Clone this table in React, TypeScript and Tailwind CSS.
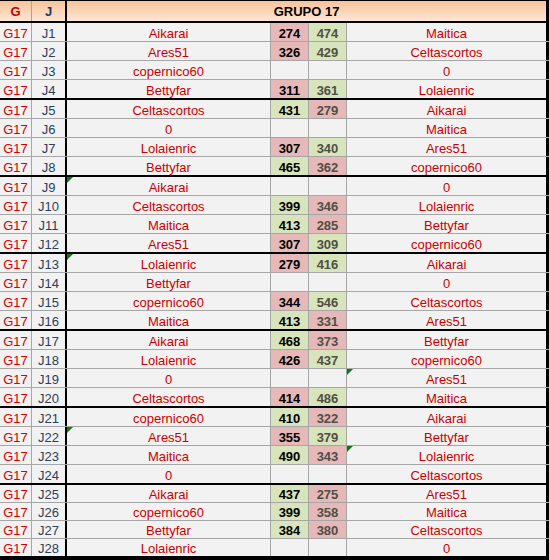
import React from "react";

type Row = {
  j: string;
  a: string;
  b: string;
  s1?: number;
  s2?: number;
  triA?: boolean;
  triB?: boolean;
};

const rows: Row[] = [
  { j: "J1", a: "Aikarai", b: "Maitica", s1: 274, s2: 474 },
  { j: "J2", a: "Ares51", b: "Celtascortos", s1: 326, s2: 429 },
  { j: "J3", a: "copernico60", b: "0" },
  { j: "J4", a: "Bettyfar", b: "Lolaienric", s1: 311, s2: 361 },
  { j: "J5", a: "Celtascortos", b: "Aikarai", s1: 431, s2: 279 },
  { j: "J6", a: "0", b: "Maitica" },
  { j: "J7", a: "Lolaienric", b: "Ares51", s1: 307, s2: 340 },
  { j: "J8", a: "Bettyfar", b: "copernico60", s1: 465, s2: 362 },
  { j: "J9", a: "Aikarai", b: "0", triA: true },
  { j: "J10", a: "Celtascortos", b: "Lolaienric", s1: 399, s2: 346 },
  { j: "J11", a: "Maitica", b: "Bettyfar", s1: 413, s2: 285 },
  { j: "J12", a: "Ares51", b: "copernico60", s1: 307, s2: 309 },
  { j: "J13", a: "Lolaienric", b: "Aikarai", s1: 279, s2: 416, triA: true },
  { j: "J14", a: "Bettyfar", b: "0" },
  { j: "J15", a: "copernico60", b: "Celtascortos", s1: 344, s2: 546 },
  { j: "J16", a: "Maitica", b: "Ares51", s1: 413, s2: 331 },
  { j: "J17", a: "Aikarai", b: "Bettyfar", s1: 468, s2: 373 },
  { j: "J18", a: "Lolaienric", b: "copernico60", s1: 426, s2: 437 },
  { j: "J19", a: "0", b: "Ares51", triB: true },
  { j: "J20", a: "Celtascortos", b: "Maitica", s1: 414, s2: 486 },
  { j: "J21", a: "copernico60", b: "Aikarai", s1: 410, s2: 322 },
  { j: "J22", a: "Ares51", b: "Bettyfar", s1: 355, s2: 379, triA: true },
  { j: "J23", a: "Maitica", b: "Lolaienric", s1: 490, s2: 343, triB: true },
  { j: "J24", a: "0", b: "Celtascortos" },
  { j: "J25", a: "Aikarai", b: "Ares51", s1: 437, s2: 275 },
  { j: "J26", a: "copernico60", b: "Maitica", s1: 399, s2: 358 },
  { j: "J27", a: "Bettyfar", b: "Celtascortos", s1: 384, s2: 380 },
  { j: "J28", a: "Lolaienric", b: "0" },
];

const Tri = () => (
  <svg className="absolute left-0 top-0" width="6" height="6" viewBox="0 0 6 6">
    <polygon points="0,0 6,0 0,6" fill="#0f7a0f" />
  </svg>
);

function rowClass(i: number): string {
  if (i === 27) return "h-[21px] border-b-[4px] border-black";
  if (i >= 24) return "h-[18px] border-b border-[#a6a6a6]";
  if (i % 4 === 3) return "h-[20px] border-b-2 border-black";
  return "h-[19px] border-b border-[#a6a6a6]";
}

export default function App() {
  return (
    <div
      className="w-[549px] h-[560px] bg-[#f2f2f2] overflow-hidden"
      style={{ fontFamily: '"Liberation Sans", Arial, sans-serif' }}
    >
      <div className="flex h-[23px] border-t border-b-2 border-black bg-gradient-to-b from-[#f9c39a] to-[#fde6d6] text-[13px] font-bold leading-none">
        <div className="w-[32px] border-r border-[#a6a6a6] flex items-center justify-center pt-[1px] text-[#c00000]">G</div>
        <div className="w-[35px] border-r-2 border-black flex items-center justify-center pt-[1px] text-[#1f3864]">J</div>
        <div className="w-[482px] border-r-[3px] border-black flex items-center justify-center pt-[1px] text-black">GRUPO 17</div>
      </div>
      {rows.map((r, i) => {
        const has = r.s1 !== undefined && r.s2 !== undefined;
        const s1Bg = has ? (r.s1! > r.s2! ? "bg-[#d8e4bc]" : "bg-[#e6b8b7]") : "";
        const s2Bg = has ? (r.s2! > r.s1! ? "bg-[#d8e4bc]" : "bg-[#e6b8b7]") : "";
        return (
          <div key={r.j} className={`flex text-[13px] leading-none ${rowClass(i)}`}>
            <div className="w-[32px] border-r border-[#a6a6a6] flex items-center justify-center pt-[2px] text-[#d40000]">G17</div>
            <div className="w-[35px] border-r-2 border-black flex items-center justify-center pt-[2px] text-[#2a3f5c]">{r.j}</div>
            <div className="relative w-[204px] border-r border-[#a6a6a6] flex items-center justify-center pt-[2px] text-[#c80000]">
              {r.triA && <Tri />}
              {r.a}
            </div>
            <div className={`w-[38px] border-r border-[#a6a6a6] flex items-center justify-center pt-[2px] font-bold text-black ${s1Bg}`}>
              {has ? r.s1 : ""}
            </div>
            <div className={`w-[38px] border-r border-[#a6a6a6] flex items-center justify-center pt-[2px] font-bold text-[#4f4f45] ${s2Bg}`}>
              {has ? r.s2 : ""}
            </div>
            <div className="relative w-[202px] border-r-[3px] border-black flex items-center justify-center pt-[2px] text-[#c80000]">
              {r.triB && <Tri />}
              {r.b}
            </div>
          </div>
        );
      })}
    </div>
  );
}
